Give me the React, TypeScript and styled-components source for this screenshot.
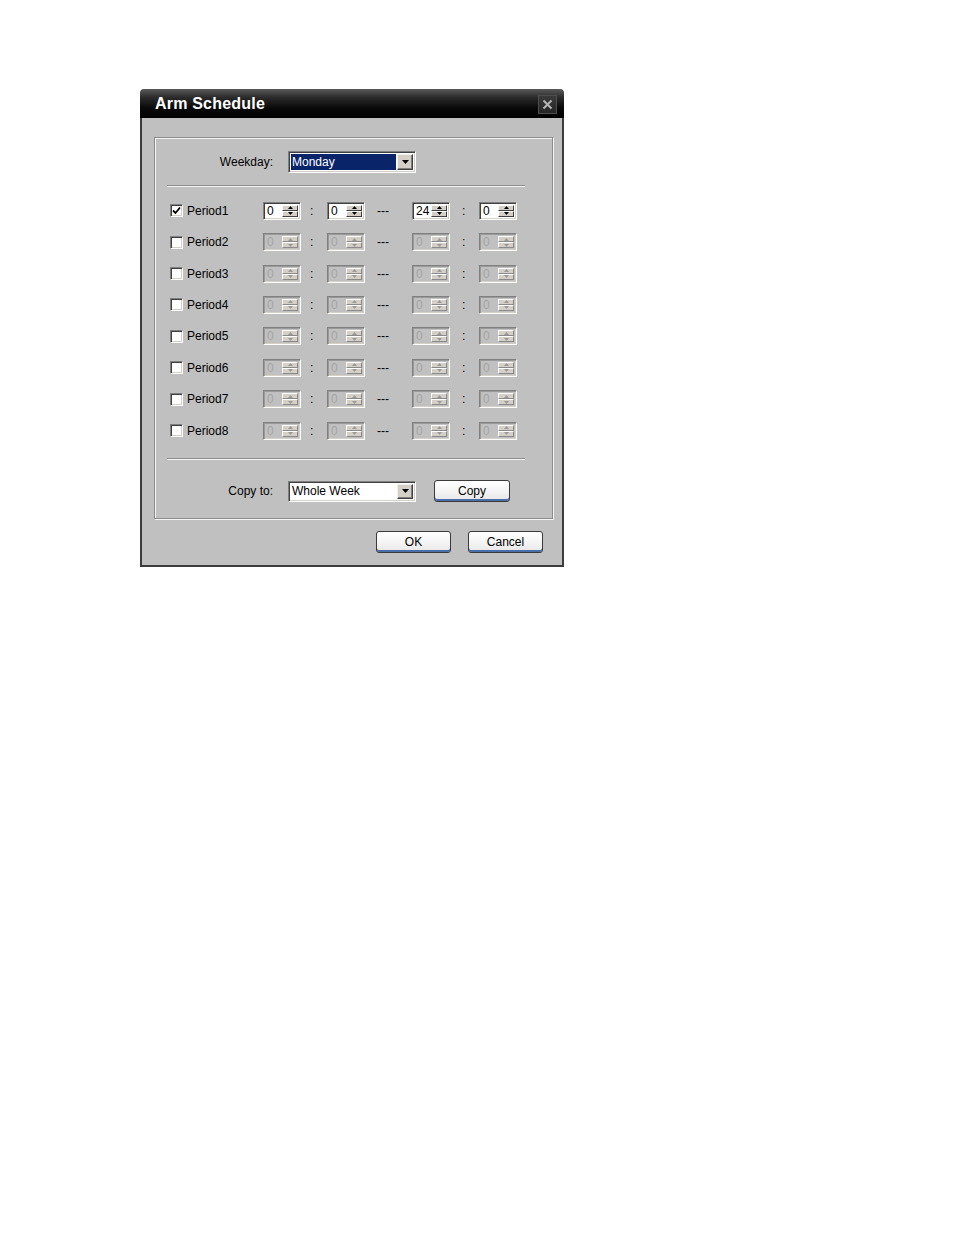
import React from "react";
import styled, { createGlobalStyle } from "styled-components";

const Global = createGlobalStyle`
  html, body { margin: 0; padding: 0; background: #ffffff; }
  body { font-family: "Liberation Sans", Arial, sans-serif; }
`;

const Page = styled.div`
  padding: 89px 0 0 140px;
  height: 1146px;
`;

const Dialog = styled.div`
  width: 424px;
  height: 478px;
  display: flex;
  flex-direction: column;
  box-sizing: border-box;
`;

const TitleBar = styled.div`
  height: 29px;
  border-radius: 4px 4px 0 0;
  background: linear-gradient(#5a5a5a 0%, #2a2a2a 30%, #0a0a0a 65%, #000 100%);
  display: flex;
  align-items: center;
  justify-content: space-between;
  padding: 0 7px 0 15px;
  box-sizing: border-box;
`;

const Title = styled.div`
  color: #fff;
  font-weight: bold;
  font-size: 16px;
  letter-spacing: 0.2px;
  margin-top: 1px;
`;

const CloseBtn = styled.div`
  width: 19px;
  height: 19px;
  background: linear-gradient(#3a3a3a, #262626);
  border: 1px solid #4e4e4e;
  box-sizing: border-box;
  display: flex;
  align-items: center;
  justify-content: center;
  margin-top: 1px;
`;

const Body = styled.div`
  flex: 1;
  background: #c0c0c0;
  border: 2px solid #3c3c3c;
  border-top: none;
  padding: 19px 9px 12px 12px;
  display: flex;
  flex-direction: column;
`;

const Group = styled.div`
  height: 382px;
  box-sizing: border-box;
  border: 1px solid #8c8c8c;
  box-shadow: inset 1px 1px 0 #f4f4f4, 1px 1px 0 #f4f4f4;
  padding: 13px 0 0 0;
  display: flex;
  flex-direction: column;
`;

const FieldRow = styled.div<{ $h: number; $mt?: number }>`
  display: flex;
  align-items: center;
  height: ${(p) => p.$h}px;
  margin-top: ${(p) => p.$mt ?? 0}px;
`;

const FieldLabel = styled.div`
  width: 118px;
  text-align: right;
  font-size: 12px;
  color: #000;
  margin-right: 15px;
`;

const Separator = styled.div<{ $mt: number }>`
  margin: ${(p) => p.$mt}px 0 0 12px;
  width: 358px;
  height: 1px;
  background: #8c8c8c;
  border-bottom: 1px solid #f4f4f4;
`;

const Combo = styled.div<{ $h: number }>`
  width: 128px;
  height: ${(p) => p.$h}px;
  box-sizing: border-box;
  border-top: 1px solid #808080;
  border-left: 1px solid #808080;
  border-right: 1px solid #fff;
  border-bottom: 1px solid #fff;
  box-shadow: inset 1px 1px 0 #404040, inset -1px -1px 0 #d4d0c8;
  background: #fff;
  padding: 2px;
  display: flex;
`;

const ComboText = styled.div<{ $sel?: boolean }>`
  flex: 1;
  font-size: 12px;
  line-height: 1;
  display: flex;
  align-items: center;
  padding-left: 1px;
  background: ${(p) => (p.$sel ? "#0a246a" : "#fff")};
  color: ${(p) => (p.$sel ? "#fff" : "#000")};
  margin-right: 1px;
`;

const ComboButton = styled.div`
  width: 16px;
  box-sizing: border-box;
  background: #d4d0c8;
  border-top: 1px solid #f0f0f0;
  border-left: 1px solid #f0f0f0;
  border-right: 1px solid #404040;
  border-bottom: 1px solid #404040;
  box-shadow: inset -1px -1px 0 #808080;
  display: flex;
  align-items: center;
  justify-content: center;
`;

const Rows = styled.div`
  margin-top: 8px;
  display: flex;
  flex-direction: column;
`;

const PeriodRow = styled.div`
  height: 31.43px;
  display: flex;
  align-items: center;
`;

const Lead = styled.div`
  width: 108px;
  box-sizing: border-box;
  padding-left: 15px;
  display: flex;
  align-items: center;
`;

const CheckBox = styled.div`
  width: 13px;
  height: 13px;
  box-sizing: border-box;
  background: #fff;
  border-top: 1px solid #808080;
  border-left: 1px solid #808080;
  border-right: 1px solid #fff;
  border-bottom: 1px solid #fff;
  box-shadow: inset 1px 1px 0 #404040, inset -1px -1px 0 #d4d0c8;
  display: flex;
  align-items: center;
  justify-content: center;
`;

const PeriodLabel = styled.span`
  font-size: 12px;
  margin-left: 4px;
  color: #000;
`;

const Sep = styled.div<{ $w: number; $pl: number }>`
  width: ${(p) => p.$w}px;
  box-sizing: border-box;
  padding-left: ${(p) => p.$pl}px;
  font-size: 12px;
  color: #000;
`;

const Spin = styled.div<{ $off?: boolean }>`
  width: 38px;
  height: 18px;
  box-sizing: border-box;
  border-top: 1px solid #808080;
  border-left: 1px solid #808080;
  border-right: 1px solid #fff;
  border-bottom: 1px solid #fff;
  box-shadow: ${(p) =>
    p.$off
      ? "inset 1px 1px 0 #9a9a9a, inset -1px -1px 0 #d4d0c8"
      : "inset 1px 1px 0 #404040, inset -1px -1px 0 #d4d0c8"};
  background: ${(p) => (p.$off ? "#c0c0c0" : "#fff")};
  display: flex;
  padding: 1px;
`;

const SpinText = styled.div<{ $off?: boolean }>`
  flex: 1;
  font-size: 12px;
  line-height: 15px;
  padding-left: 2px;
  color: ${(p) => (p.$off ? "#a4a4a4" : "#000")};
`;

const SpinBtns = styled.div`
  width: 17px;
  display: flex;
  flex-direction: column;
  padding: 1px 1px 1px 0;
  box-sizing: border-box;
  gap: 0px;
`;

const SpinHalf = styled.div<{ $off?: boolean }>`
  flex: 1;
  background: #d4d0c8;
  border-top: 1px solid #fff;
  border-left: 1px solid #fff;
  border-right: 1px solid ${(p) => (p.$off ? "#8a8a8a" : "#404040")};
  border-bottom: 1px solid ${(p) => (p.$off ? "#8a8a8a" : "#404040")};
  display: flex;
  align-items: center;
  justify-content: center;
`;

const CopyRow = styled.div`
  display: flex;
  align-items: center;
  height: 24px;
  margin-top: 19px;
`;

const Button = styled.div<{ $w: number; $ml?: number }>`
  width: ${(p) => p.$w}px;
  height: 22px;
  margin-left: ${(p) => p.$ml ?? 0}px;
  box-sizing: border-box;
  border: 1px solid #3a3a3a;
  border-radius: 3px;
  background: linear-gradient(#ffffff, #f2f2f2 60%, #e6e6e6);
  box-shadow: inset 0 -2px 0 #4a6ea8;
  font-size: 12px;
  color: #000;
  display: flex;
  align-items: center;
  justify-content: center;
  padding-bottom: 1px;
`;

const Footer = styled.div`
  display: flex;
  justify-content: flex-end;
  margin-top: 12px;
  padding-right: 10px;
  gap: 17px;
`;

const DownArrow = ({ color = "#000" }: { color?: string }) => (
  <svg width="7" height="4" viewBox="0 0 7 4">
    <path d="M0 0h7L3.5 4z" fill={color} />
  </svg>
);

const SmallArrow = ({ up, color }: { up?: boolean; color: string }) => (
  <svg width="5" height="3" viewBox="0 0 5 3">
    <path d={up ? "M0 3h5L2.5 0z" : "M0 0h5L2.5 3z"} fill={color} />
  </svg>
);

const SpinBox = ({ value, off }: { value: string; off?: boolean }) => (
  <Spin $off={off}>
    <SpinText $off={off}>{value}</SpinText>
    <SpinBtns>
      <SpinHalf $off={off}>
        <SmallArrow up color={off ? "#9a9a9a" : "#000"} />
      </SpinHalf>
      <SpinHalf $off={off}>
        <SmallArrow color={off ? "#9a9a9a" : "#000"} />
      </SpinHalf>
    </SpinBtns>
  </Spin>
);

const periods = [1, 2, 3, 4, 5, 6, 7, 8];

export default function App() {
  return (
    <>
      <Global />
      <Page>
        <Dialog>
          <TitleBar>
            <Title>Arm Schedule</Title>
            <CloseBtn>
              <svg width="11" height="11" viewBox="0 0 11 11">
                <path d="M1.5 1.5l8 8M9.5 1.5l-8 8" stroke="#b4b4b4" strokeWidth="2" />
              </svg>
            </CloseBtn>
          </TitleBar>
          <Body>
            <Group>
              <FieldRow $h={22}>
                <FieldLabel>Weekday:</FieldLabel>
                <Combo $h={22}>
                  <ComboText $sel>Monday</ComboText>
                  <ComboButton>
                    <DownArrow />
                  </ComboButton>
                </Combo>
              </FieldRow>
              <Separator $mt={12} />
              <Rows>
                {periods.map((n) => {
                  const on = n === 1;
                  return (
                    <PeriodRow key={n}>
                      <Lead>
                        <CheckBox>
                          {on && (
                            <svg width="9" height="9" viewBox="0 0 9 9">
                              <path d="M1 4.5l2.5 2.5L8 1.5" stroke="#000" strokeWidth="1.8" fill="none" />
                            </svg>
                          )}
                        </CheckBox>
                        <PeriodLabel>Period{n}</PeriodLabel>
                      </Lead>
                      <SpinBox value="0" off={!on} />
                      <Sep $w={26} $pl={9}>:</Sep>
                      <SpinBox value="0" off={!on} />
                      <Sep $w={47} $pl={12}>---</Sep>
                      <SpinBox value={on ? "24" : "0"} off={!on} />
                      <Sep $w={29} $pl={12}>:</Sep>
                      <SpinBox value="0" off={!on} />
                    </PeriodRow>
                  );
                })}
              </Rows>
              <Separator $mt={12} />
              <CopyRow>
                <FieldLabel>Copy to:</FieldLabel>
                <Combo $h={21}>
                  <ComboText>Whole Week</ComboText>
                  <ComboButton>
                    <DownArrow />
                  </ComboButton>
                </Combo>
                <Button $w={76} $ml={18}>Copy</Button>
              </CopyRow>
            </Group>
            <Footer>
              <Button $w={75}>OK</Button>
              <Button $w={75}>Cancel</Button>
            </Footer>
          </Body>
        </Dialog>
      </Page>
    </>
  );
}
